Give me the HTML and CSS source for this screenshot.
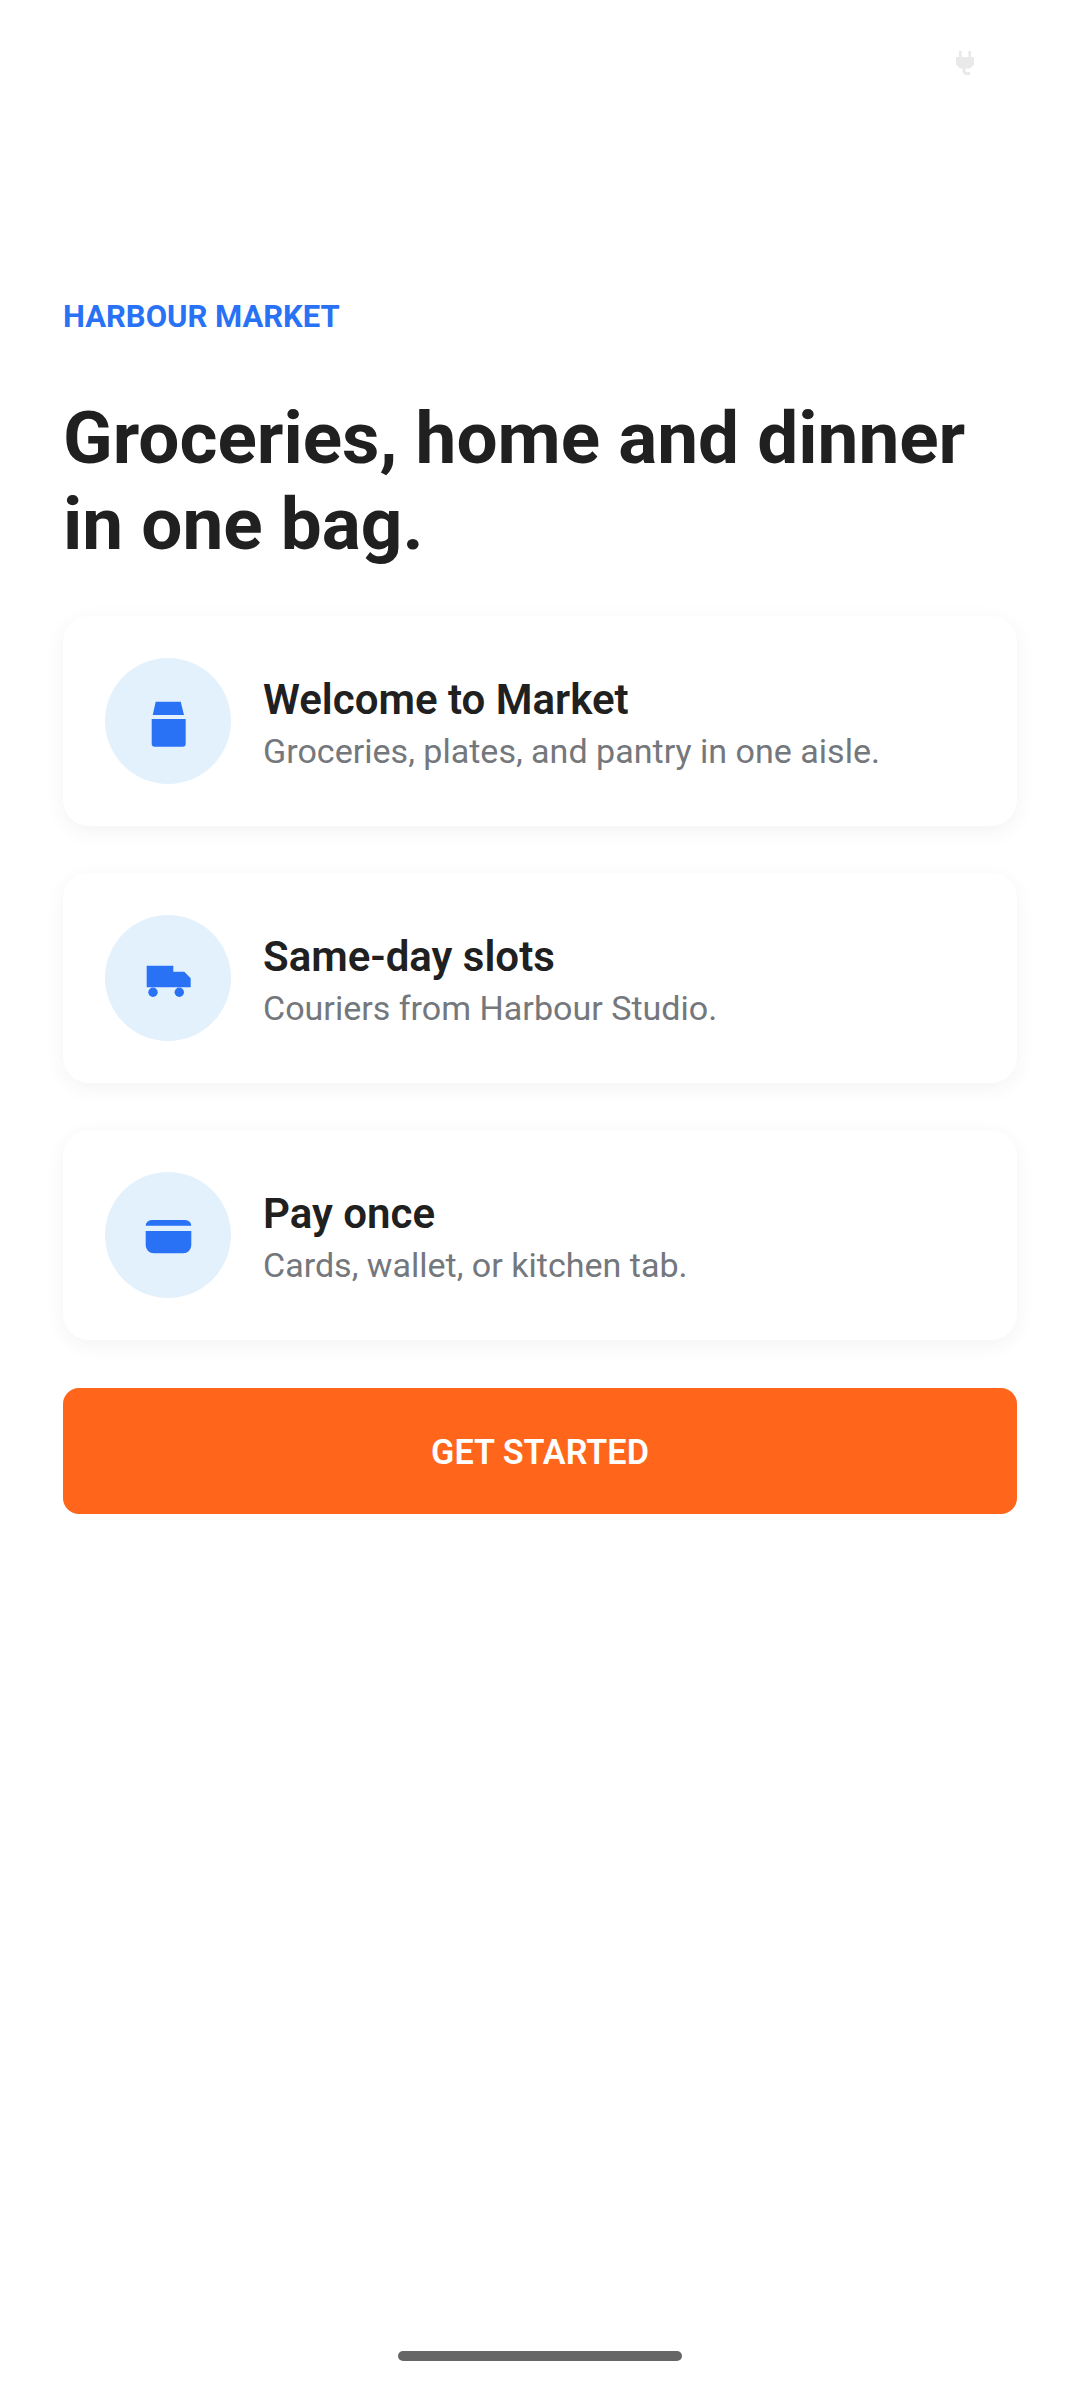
FILE: index.html
```html
<!DOCTYPE html>
<html lang="en">
<head>
<meta charset="utf-8">
<title>Harbour Market</title>
<link rel="stylesheet" href="styles.css">
</head>
<body>
<div class="screen">
  <div class="status">
    <svg class="plug" width="18" height="24" viewBox="0 0 18 24"><path class="plug-fill" d="M3 0h2.600v6h6.800V0H15v6h3v7.500l-4 4H4l-4-4V6h3z"/><path class="plug-stem" d="M8 17v2.500c0 2 1 3 3.500 3H14"/></svg>
  </div>
  <main class="content">
    <div class="eyebrow">HARBOUR MARKET</div>
    <h1 class="headline">Groceries, home and dinner<br>in one bag.</h1>
    <section class="cards">
      <div class="card">
        <div class="badge">
          <svg class="icon" width="60" height="60" viewBox="0 0 60 60"><path d="M17.700 10.700h25L46 24H14.700zM13.700 28h34v24.700a3 3 0 0 1-3 3h-28a3 3 0 0 1-3-3z"/></svg>
        </div>
        <div class="copy">
          <div class="card-title">Welcome to Market</div>
          <div class="card-text">Groceries, plates, and pantry in one aisle.</div>
        </div>
      </div>
      <div class="card">
        <div class="badge">
          <svg class="icon" width="60" height="60" viewBox="0 0 60 60"><path d="M8.700 17.700h26.600v6h11l6.400 6.600v9H8.700z"/><circle cx="15" cy="44.300" r="4.700"/><circle cx="41.300" cy="44.300" r="4.700"/></svg>
        </div>
        <div class="copy">
          <div class="card-title">Same-day slots</div>
          <div class="card-text">Couriers from Harbour Studio.</div>
        </div>
      </div>
      <div class="card">
        <div class="badge">
          <svg class="icon" width="60" height="60" viewBox="0 0 60 60"><path d="M13.700 15h33.600a6 5.700 0 0 1 6 5.700H7.700a6 5.700 0 0 1 6-5.700zM7.700 26h45.600v14.300a8 8 0 0 1-8 8H15.700a8 8 0 0 1-8-8z"/></svg>
        </div>
        <div class="copy">
          <div class="card-title">Pay once</div>
          <div class="card-text">Cards, wallet, or kitchen tab.</div>
        </div>
      </div>
    </section>
    <button class="cta">GET STARTED</button>
  </main>
  <div class="home-bar"></div>
</div>
</body>
</html>
```

FILE: styles.css
```css
* { box-sizing: border-box; }
html, body { margin: 0; padding: 0; background: #fff; }
.screen {
  width: 1080px;
  height: 2392px;
  display: flex;
  flex-direction: column;
  font-family: Roboto, sans-serif;
  background: #fff;
}
.status {
  height: 296px;
  display: flex;
  justify-content: flex-end;
  align-items: flex-start;
  padding: 51px 106px 0 0;
  flex: none;
}
.plug { display: block; }
.plug-fill { fill: #e9e9e9; }
.plug-stem { fill: none; stroke: #e9e9e9; stroke-width: 3; }
.content {
  padding: 0 63px;
  display: flex;
  flex-direction: column;
}
.eyebrow {
  color: #2972f5;
  font-size: 31px;
  font-weight: 700;
  line-height: 42px;
}
.headline {
  margin: 57px 0 0;
  color: #202020;
  font-size: 72.9px;
  font-weight: 700;
  line-height: 86px;
}
.cards {
  margin-top: 49px;
  display: flex;
  flex-direction: column;
  gap: 47px;
}
.card {
  height: 210px;
  padding: 0 42px;
  display: flex;
  align-items: center;
  gap: 32px;
  background: #fff;
  border-radius: 26px;
  box-shadow: 0 5px 21px rgba(0, 0, 0, 0.05);
}
.badge {
  width: 126px;
  height: 126px;
  border-radius: 50%;
  background: #e3f1fd;
  display: flex;
  align-items: center;
  justify-content: center;
  flex: none;
}
.icon { display: block; fill: #2972f5; }
.copy { display: flex; flex-direction: column; margin-top: 7px; }
.card-title {
  color: #202020;
  font-size: 42px;
  font-weight: 600;
  line-height: 52px;
}
.card-text {
  color: #74777c;
  font-size: 34.050px;
  line-height: 50px;
}
.cta {
  margin-top: 48px;
  height: 126px;
  padding: 2px 0 0;
  border: 0;
  border-radius: 16px;
  background: #ff661b;
  color: #fff;
  font-family: inherit;
  font-size: 34.200px;
  font-weight: 600;
}
.home-bar {
  margin: auto auto 31px;
  width: 284px;
  height: 10px;
  border-radius: 5px;
  background: #666;
}
```
